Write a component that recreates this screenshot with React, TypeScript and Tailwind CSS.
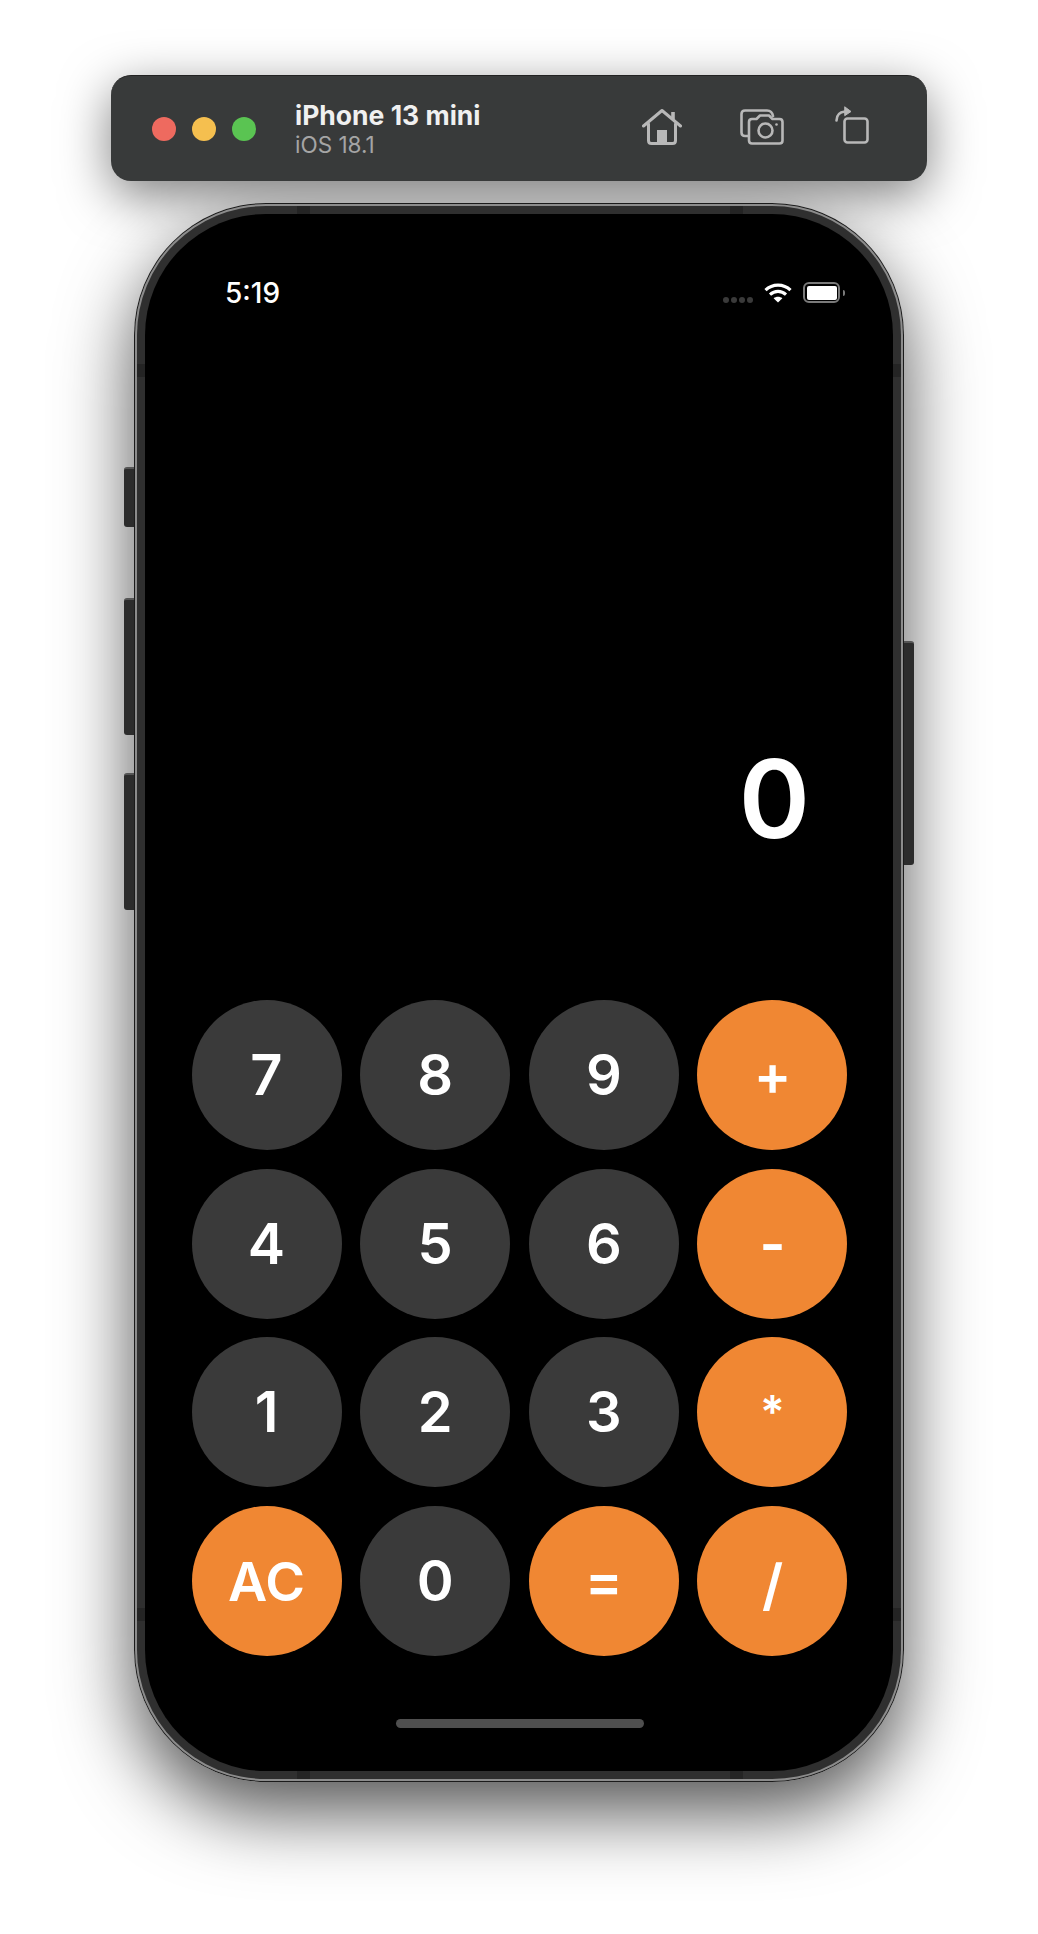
const keys = [
  { label: "7", orange: false, text: "text-[56px]" },
  { label: "8", orange: false, text: "text-[56px]" },
  { label: "9", orange: false, text: "text-[56px]" },
  { label: "+", orange: true, text: "text-[56px]" },
  { label: "4", orange: false, text: "text-[56px]" },
  { label: "5", orange: false, text: "text-[56px]" },
  { label: "6", orange: false, text: "text-[56px]" },
  { label: "-", orange: true, text: "text-[56px]" },
  { label: "1", orange: false, text: "text-[56px]" },
  { label: "2", orange: false, text: "text-[56px]" },
  { label: "3", orange: false, text: "text-[56px]" },
  { label: "*", orange: true, text: "text-[46px]" },
  { label: "AC", orange: true, text: "text-[54px]" },
  { label: "0", orange: false, text: "text-[56px]" },
  { label: "=", orange: true, text: "text-[56px]" },
  { label: "/", orange: true, text: "text-[56px] pt-[8px]" },
];

function HomeIcon() {
  return (
    <svg width="40" height="36" viewBox="0 0 40 36" fill="none" stroke="#b8b8b8" strokeWidth="3" strokeLinecap="round" strokeLinejoin="round">
      <path d="M1.5 17 L20 1.5 L38.5 17" />
      <path d="M31 10 V3" strokeWidth="3.6" strokeLinecap="butt" />
      <path d="M6.5 15 V31.5 Q6.5 34.5 9.5 34.5 H30.5 Q33.5 34.5 33.5 31.5 V15" />
      <rect x="15" y="21" width="10" height="13" fill="#b8b8b8" stroke="none" />
    </svg>
  );
}

function CameraIcon() {
  return (
    <svg width="44" height="36" viewBox="0 0 44 36" fill="none" stroke="#b8b8b8" strokeWidth="2.6" strokeLinecap="round" strokeLinejoin="round">
      <path d="M8 27 H5 Q1.5 27 1.5 23.5 V5 Q1.5 1.5 5 1.5 H27 Q32 1.5 33 7" />
      <path d="M12 34.5 Q9 34.5 9 31.5 V13 Q9 10 12 10 H16.5 L20 6.5 H29 L32.5 10 H39.5 Q42.5 10 42.5 13 V31.5 Q42.5 34.5 39.5 34.5 Z" />
      <circle cx="25.5" cy="21.5" r="7" />
      <circle cx="36.5" cy="15.5" r="1.3" fill="#b8b8b8" stroke="none" />
    </svg>
  );
}

function RotateIcon() {
  return (
    <svg className="mb-[5px]" width="34" height="38" viewBox="0 0 34 38" fill="none" stroke="#b8b8b8" strokeWidth="2.6" strokeLinecap="round" strokeLinejoin="round">
      <rect x="9.5" y="12.5" width="23" height="24" rx="3" />
      <path d="M1.5 14.5 Q1.5 6.5 10 5.5" />
      <path d="M10 1 L16 5.5 L10 9.5 Z" fill="#b8b8b8" strokeWidth="1" />
    </svg>
  );
}

function WifiIcon() {
  return (
    <svg width="28" height="20" viewBox="0 0 28 20" fill="none" stroke="#ffffff" strokeWidth="3.2">
      <path d="M1.5 7.2 C8.5 0.4 19.5 0.4 26.5 7.2" />
      <path d="M6 11.6 C10.8 7.4 17.2 7.4 22 11.6" />
      <path d="M14 19.6 L9.6 15.2 C12.2 13.2 15.8 13.2 18.4 15.2 Z" fill="#ffffff" stroke="none" />
    </svg>
  );
}

export default function App() {
  return (
    <div className="relative h-[1934px] w-[1038px] overflow-hidden bg-white pt-[75px] font-['Inter',sans-serif]">
      {/* simulator toolbar */}
      <div className="relative z-[1] mx-auto flex h-[106px] w-[816px] items-center rounded-[20px] border-t border-[#222] bg-[#383a3a] pl-[41px] shadow-[0_14px_50px_rgba(0,0,0,0.5)]">
        <div className="flex gap-4">
          <div className="h-6 w-6 rounded-full bg-[#ee6a5f]" />
          <div className="h-6 w-6 rounded-full bg-[#f5bf4f]" />
          <div className="h-6 w-6 rounded-full bg-[#5ac452]" />
        </div>
        <div className="ml-[39px] flex flex-col pt-[1px]">
          <span className="text-[26.5px] leading-[30px] font-bold text-[#f0f0f0]">iPhone 13 mini</span>
          <span className="mt-[1px] text-[22.5px] leading-[28px] text-[#a5a5a5]">iOS 18.1</span>
        </div>
        <div className="ml-auto mr-[58px] mb-[3px] flex items-center">
          <HomeIcon />
          <div className="ml-[58px] flex">
            <CameraIcon />
          </div>
          <div className="ml-[51px] flex">
            <RotateIcon />
          </div>
        </div>
      </div>

      {/* device */}
      <div className="relative mx-auto mt-[22px] h-[1579px] w-[770px] rounded-[132px] shadow-[0_30px_75px_rgba(0,0,0,0.68)]">
        <div className="absolute left-[-10px] top-[264px] z-[2] h-[60px] w-[11px] rounded-l-[3px] border-t-2 border-[#555] bg-[#2c2c2c]" />
        <div className="absolute left-[-10px] top-[395px] z-[2] h-[137px] w-[11px] rounded-l-[3px] border-t-2 border-[#555] bg-[#2c2c2c]" />
        <div className="absolute left-[-10px] top-[570px] z-[2] h-[137px] w-[11px] rounded-l-[3px] border-t-2 border-[#555] bg-[#2c2c2c]" />
        <div className="absolute right-[-10px] top-[438px] z-[2] h-[224px] w-[11px] rounded-r-[3px] border-t-2 border-[#555] bg-[#2c2c2c]" />

        <div className="relative z-[2] h-full w-full rounded-[132px] bg-[#1b1b1b] p-px">
          <div className="h-full w-full rounded-[131px] bg-[#8c8c8c] p-[2px]">
            <div className="h-full w-full rounded-[129px] bg-[#2f2f2f] p-[8px]">
              <div className="flex h-full w-full flex-col rounded-[121px] bg-black">
                {/* status bar */}
                <div className="flex h-[158px] items-start justify-between pl-[80px] pr-[48px] pt-[62px]">
                  <span className="text-[28px] leading-[34px] font-medium text-white">5:19</span>
                  <div className="flex items-center pt-[6px]">
                    <div className="mr-[11px] mt-[14px] flex gap-[2px]">
                      <div className="h-[6px] w-[6px] rounded-full bg-[#3a3a3a]" />
                      <div className="h-[6px] w-[6px] rounded-full bg-[#3a3a3a]" />
                      <div className="h-[6px] w-[6px] rounded-full bg-[#3a3a3a]" />
                      <div className="h-[6px] w-[6px] rounded-full bg-[#3a3a3a]" />
                    </div>
                    <WifiIcon />
                    <div className="ml-[11px] flex items-center">
                      <div className="h-[21px] w-[37px] rounded-[6px] border-2 border-[#7a7a7a] p-[1.5px]">
                        <div className="h-full w-full rounded-[2px] bg-white" />
                      </div>
                      <div className="ml-[3px] h-[6px] w-[2px] rounded-r-sm bg-[#7a7a7a]" />
                    </div>
                  </div>
                </div>

                {/* display */}
                <div className="flex flex-1 items-end justify-end pb-[145px] pr-[83px]">
                  <span className="text-[108px] leading-[112px] font-semibold text-white">0</span>
                </div>

                {/* keypad */}
                <div className="grid grid-cols-4 gap-[18.67px] pl-[46.5px] pr-[45.5px]">
                  {keys.map((key) => (
                    <button
                      key={key.label}
                      className={
                        key.orange
                          ? `flex h-[150px] w-[150px] items-center justify-center rounded-full bg-[#f08733] font-semibold text-white ${key.text}`
                          : `flex h-[150px] w-[150px] items-center justify-center rounded-full bg-[#3a3a3a] font-semibold text-white ${key.text}`
                      }
                    >
                      {key.label}
                    </button>
                  ))}
                </div>

                {/* home indicator */}
                <div className="flex h-[115px] justify-center pl-[2px] pt-[63px]">
                  <div className="h-[9px] w-[248px] rounded-full bg-[#4f4f4f]" />
                </div>
              </div>
            </div>
          </div>
        </div>

        {/* antenna bands */}
        <div className="absolute left-[163px] top-[3px] z-[3] h-[8px] w-[13px] bg-[#242424]" />
        <div className="absolute right-[161px] top-[3px] z-[3] h-[8px] w-[13px] bg-[#242424]" />
        <div className="absolute bottom-[3px] left-[163px] z-[3] h-[8px] w-[13px] bg-[#242424]" />
        <div className="absolute bottom-[3px] right-[161px] z-[3] h-[8px] w-[13px] bg-[#242424]" />
        <div className="absolute left-[3px] top-[161px] z-[3] h-[13px] w-[8px] bg-[#242424]" />
        <div className="absolute right-[3px] top-[161px] z-[3] h-[13px] w-[8px] bg-[#242424]" />
        <div className="absolute bottom-[161px] left-[3px] z-[3] h-[13px] w-[8px] bg-[#242424]" />
        <div className="absolute bottom-[161px] right-[3px] z-[3] h-[13px] w-[8px] bg-[#242424]" />
      </div>
    </div>
  );
}
